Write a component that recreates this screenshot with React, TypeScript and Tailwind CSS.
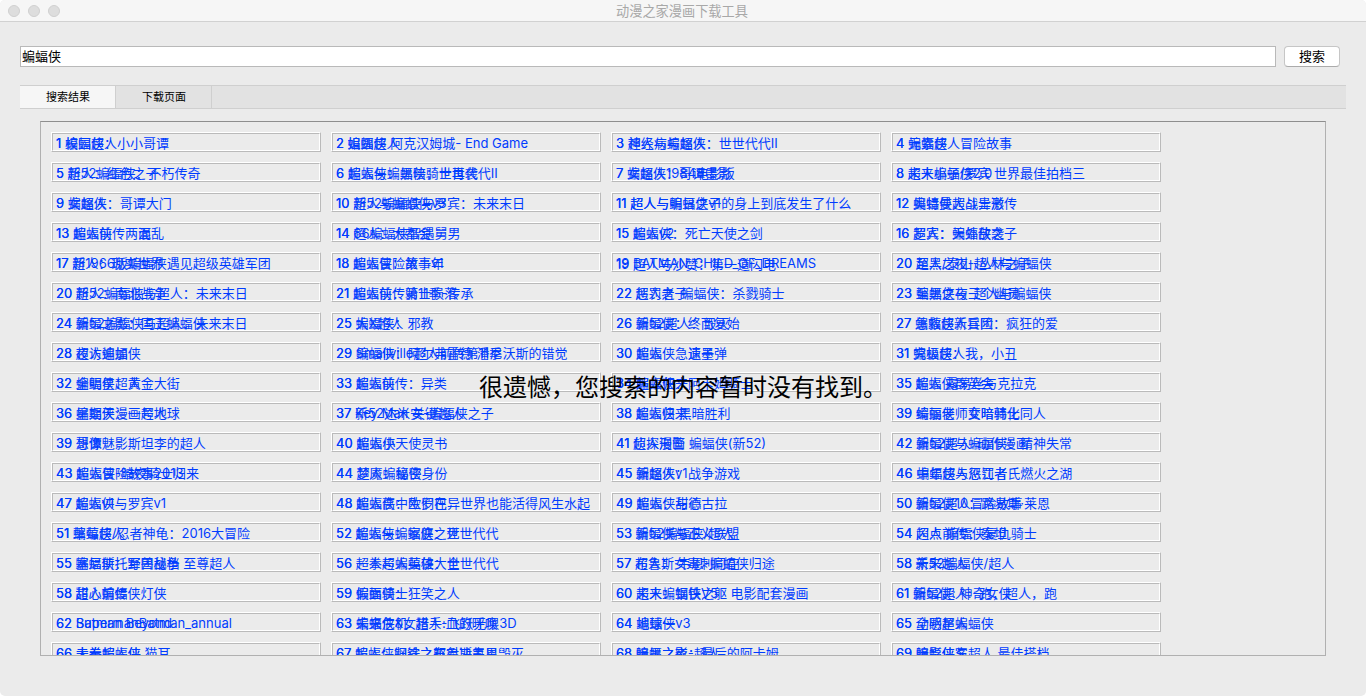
type Entry = [string, string, string];

const entries: Entry[] = [
  ["1", "蝙蝠侠：小小哥谭", "校园超人"],
  ["2", "蝙蝠侠 阿克汉姆城- End Game", "姐圆超人"],
  ["3", "超人与蝙蝠侠：世世代代II", "神经病与超人"],
  ["4", "元素超人冒险故事", "蝙蝠侠"],
  ["5", "新52蝙蝠侠：不朽传奇", "超人：红色之子"],
  ["6", "超人与蝙蝠侠：世世代代II", "蝙蝠侠：黑暗骑士再袭"],
  ["7", "女超人1984电影版", "蝙蝠侠：哥谭墨影"],
  ["8", "超人小子/罗宾 世界最佳拍档三", "未来蝙蝠侠2.0"],
  ["9", "蝙蝠侠：哥谭大门", "女超人"],
  ["10", "新52蝙蝠侠与罗宾：未来末日", "超人与蝙蝠侠v3"],
  ["11", "超人与明日之子的身上到底发生了什么", "超人与蝙蝠侠v1"],
  ["12", "奥特曼超斗士激传", "蝙蝠侠大战异形"],
  ["13", "超人前传两混乱", "蝙蝠侠　　面"],
  ["14", "66蝙蝠侠智遇舅男", "超人：大都会"],
  ["15", "蝙蝠侠：死亡天使之剑", "超人v2"],
  ["16", "罗宾：蝙蝠侠之子", "超人：天外敌袭"],
  ["17", "新1966版蝙蝠侠遇见超级英雄军团", "超人：现实世界"],
  ["18", "超人冒险故事v1", "蝙蝠侠：第一年"],
  ["19", "BATMAN_CHILD_OF_DREAMS", "超人与沙赞：第一道闪电"],
  ["20", "至黑之夜-超人与蝙蝠侠", "超人/泰山-丛林之子"],
  ["20", "新52蝙蝠侠与超人：未来末日", "超人：南北战争"],
  ["21", "超人前传第11季-传承", "蝙蝠侠：骑士陨落"],
  ["22", "惩罚者-蝙蝠侠：杀戮骑士", "超人之子"],
  ["23", "至黑之夜-超人与蝙蝠侠", "蝙蝠侠与三个幽灵"],
  ["24", "新52蝙蝠侠与超人：未来末日", "蝙蝠之影：国王蝙蝠侠"],
  ["25", "蝙蝠侠：邪教", "大X超人"],
  ["26", "蝙蝠侠：终而复始", "新52超人：毁灭"],
  ["27", "蝙蝠侠新冒险：疯狂的爱", "急救超人兵团"],
  ["28", "夜访蝙蝠侠", "超人迪加"],
  ["29", "蝙蝠侠：阿尔弗雷德·潘尼沃斯的错觉", "Smallville超人前传第11季"],
  ["30", "蝙蝠侠急速子弹", "超人　　遗墨"],
  ["31", "蝙蝠侠：我，小丑", "究极超人"],
  ["32", "蝙蝠侠：黄金大街", "全明星超人"],
  ["33", "超人前传：异类", "蝙蝠侠"],
  ["34", "蝙蝠侠：阿卡姆骑士", "超人归来"],
  ["35", "超人 露易丝与克拉克", "蝙蝠侠群英会"],
  ["36", "蝙蝠侠：一号地球", "星期天漫画超人"],
  ["37", "新52达米安-蝙蝠侠之子", "Key Man 关键超人"],
  ["38", "蝙蝠侠 黑暗胜利", "超人归来"],
  ["39", "绮丽老师女暗韩化同人", "蝙蝠侠　变暗骑士"],
  ["39", "想像　　斯坦李的超人", "哥谭魅影"],
  ["40", "蝙蝠侠天使灵书", "超人小"],
  ["41", "侦探漫画 蝙蝠侠(新52)", "超人刑警"],
  ["42", "蝙蝠侠与蝙蝠侠：精神失常", "新52超人-动作漫画"],
  ["43", "蝙蝠侠-暗夜骑士归来", "超人冒险故事2013"],
  ["44", "超人：秘密身份", "梦魇蝙蝠侠"],
  ["45", "蝙蝠侠：战争游戏", "新超人v1"],
  ["46", "蝙蝠侠与忍江者氏燃火之湖", "中年超人惩罚者"],
  ["47", "蝙蝠侠与罗宾v1", "超人v1"],
  ["48", "超人高中生们在异世界也能活得风生水起", "蝙蝠侠：欧罗巴"],
  ["49", "蝙蝠侠与德古拉", "超人：甜心"],
  ["50", "蝙蝠侠10：路易斯·莱恩", "新52超人冒险故事"],
  ["51", "蝙蝠侠/忍者神龟：2016大冒险", "草莓超人"],
  ["52", "超人与蝙蝠侠：世世代代", "蝙蝠侠：家庭之死"],
  ["53", "蝙蝠侠与正义联盟", "新52蝙蝠侠/超人"],
  ["54", "闪点 蝙蝠侠复仇骑士", "超人前传：秦坦"],
  ["55", "塞尼斯托军团战争 至尊超人", "蝙蝠侠：野兽秘档"],
  ["56", "超人与蝙蝠侠：世世代代", "一拳超人英雄大全"],
  ["57", "布鲁斯·韦恩-蝙蝠侠归途", "超人：女毒刺同在"],
  ["58", "新52蝙蝠侠/超人", "未来超人"],
  ["58", "甜心蝙蝠侠灯侠", "超人前传"],
  ["59", "蝙蝠侠：狂笑之人", "假面骑士"],
  ["60", "超人：钢铁之躯 电影配套漫画", "未来蝙蝠侠V5"],
  ["61", "新52超人:  跑，超人，跑", "蝙蝠侠: 神奇女侠"],
  ["62", "SupermanBatman_annual", "Batman Beyond"],
  ["63", "未来危机: 超人-飞跃无限3D", "蝙蝠侠&女猎手:血的呼唤"],
  ["64", "蝙蝠侠v3", "地球一"],
  ["65", "全明星蝙蝠侠", "动感超人"],
  ["66", "未卷蝙蝠侠 猫耳", "大拳超人侠"],
  ["67", "蝙蝠侠归途之布鲁斯韦恩毁灭", "超人：钢铁之躯对决氪星"],
  ["68", "蝙蝠之夜：最后的阿卡姆", "暗黑之影-超人"],
  ["69", "蝙蝠侠与超人 最佳搭档", "暗影侠客"],
];

function Label({ no, title }: { no: string; title: string }) {
  const latinOnly = /^[\x20-\x7e]+$/.test(title);
  return (
    <span className={`col-start-1 row-start-1 whitespace-pre ${latinOnly ? "pb-0.5" : ""}`}>
      {no} {title}
    </span>
  );
}

function Cell({ entry }: { entry: Entry }) {
  const [no, front, back] = entry;
  return (
    <div className="h-5 border border-t-white border-l-white border-r-[#bababa] border-b-[#bababa]">
      <div className="grid h-full items-center border border-t-[#bababa] border-l-[#bababa] border-r-white border-b-white pl-[3px] pt-px text-[13px] leading-4 text-[#003cff]">
        <Label no={no} title={back} />
        <Label no={no} title={front} />
      </div>
    </div>
  );
}

export default function App() {
  return (
    <div className="h-[696px] w-[1366px] overflow-hidden bg-white font-['Inter','Noto_Sans_CJK_SC',sans-serif] text-black">
      <div className="flex h-full flex-col overflow-hidden rounded-[5px] bg-[#ebebeb]">
        <header className="grid h-[22px] shrink-0 grid-cols-[1fr_auto_1fr] items-center border-b border-[#d1d1d1] bg-[#f6f6f6]">
          <div className="flex gap-2 pl-2">
            <span className="size-3 rounded-full border border-[#cfcfcf] bg-[#dddddd]" />
            <span className="size-3 rounded-full border border-[#cfcfcf] bg-[#dddddd]" />
            <span className="size-3 rounded-full border border-[#cfcfcf] bg-[#dddddd]" />
          </div>
          <h1 className="pr-0.5 text-[13.2px] leading-5 text-[#a8a8a8]">动漫之家漫画下载工具</h1>
        </header>

        <div className="mt-6 flex h-[21px] shrink-0 gap-2 pl-5 pr-[26px]">
          <input
            className="min-w-0 flex-1 border border-[#b9b9b9] bg-white px-px text-[13px] outline-none"
            defaultValue="蝙蝠侠"
          />
          <button className="flex w-14 items-center justify-center rounded-[4px] border border-[#c6c6c6] border-b-[#ababab] bg-white pb-px text-[13px] leading-4">
            搜索
          </button>
        </div>

        <nav className="mx-5 mt-[18px] flex h-6 shrink-0 border-y border-[#cfcfcf] bg-[#e2e2e2] text-[11px]">
          <div className="flex w-24 items-center justify-center border-r border-[#cfcfcf] bg-[#f6f6f6] pl-px">搜索结果</div>
          <div className="flex w-24 items-center justify-center border-r border-[#cfcfcf] pl-px">下载页面</div>
        </nav>

        <main className="mx-10 mt-3 grid h-[535px] shrink-0 grid-cols-1 grid-rows-1 overflow-hidden border border-[#b0b0b0] border-t-[#8e8e8e]">
          <div className="col-start-1 row-start-1 grid h-0 auto-rows-[20px] grid-cols-[repeat(4,270px)] gap-2.5 p-2.5">
            {entries.map((entry, i) => (
              <Cell key={i} entry={entry} />
            ))}
          </div>
          <p className="z-10 col-start-1 row-start-1 self-center justify-self-center whitespace-nowrap pb-0.5 text-2xl">
            很遗憾，您搜索的内容暂时没有找到。
          </p>
        </main>
      </div>
    </div>
  );
}
